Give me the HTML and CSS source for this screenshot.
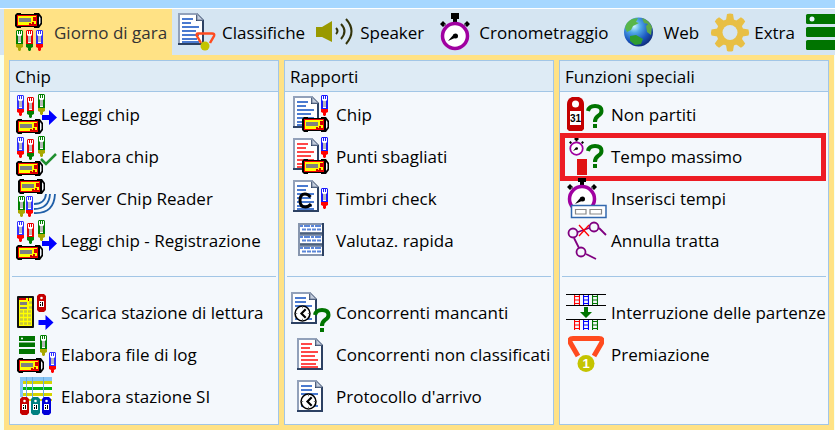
FILE: index.html
```html
<!DOCTYPE html>
<html lang="it">
<head>
<meta charset="utf-8">
<title>Giorno di gara</title>
<link rel="stylesheet" href="styles.css">
</head>
<body>
<svg class="sprites" aria-hidden="true">
  <defs>
    <symbol id="pen" viewBox="0 0 7 21">
      <path d="M1 0H6L7 1V14H0V1Z" fill="currentColor"/>
      <path d="M1 1H2V4H3V1H4V4H5V1H6V5L5 6V13H2V6L1 5Z" fill="#fff"/>
      <path d="M2 6H5V12H2Z" fill="#b8b8b8"/>
      <path d="M0 14H7V17L5 18V20L4 21H3L2 20V18L0 17Z" fill="var(--tip)"/>
    </symbol>
    <symbol id="reader" viewBox="0 0 27 15">
      <path d="M2 0H6V1H19V0H24L27 4V11L24 15H19V14H6V15H2L0 13V2Z" fill="#000"/>
      <path d="M2 2H22V13H2Z" fill="#f00000"/>
      <path d="M3 3H21V12H3Z" fill="#ff0"/>
      <path d="M4 5H16V9H4Z" fill="#808080"/>
      <path d="M18 4H21V8H18ZM14 10H16V11H14ZM17 9H19V11H21V12H14V11H17Z" fill="#d00000"/>
      <path d="M24 3L25.500 5V10L24 12Z" fill="#f4f8fc"/>
    </symbol>
    <symbol id="arrow" viewBox="0 0 15 15">
      <path d="M0 5H7V0L15 7.500L7 15V10H0Z" fill="#00f"/>
    </symbol>
    <symbol id="doc" viewBox="0 0 26 32">
      <path d="M0 0H19L26 7V32H0Z" fill="#2c4163"/>
      <path d="M0 0H19L20 2H2V30H0Z" fill="#92a1ba"/>
      <path d="M2 2H18V8H24V30H2Z" fill="#fff"/>
      <path d="M19 1L25 7H19Z" fill="#c3cddd"/>
      <path d="M19 1V7H25" fill="none" stroke="#74839c"/>
    </symbol>
    <symbol id="lines" viewBox="0 0 26 32">
      <path d="M4 6H15M4 10H13M4 14H21M4 18H18M4 22H21M4 26H19M4 29H21" stroke="currentColor" stroke-width="2" fill="none"/>
    </symbol>
    <symbol id="clock" viewBox="0 0 16 16">
      <circle cx="8" cy="8" r="7" fill="#fff" stroke="#000" stroke-width="1.500"/>
      <path d="M11 4L7 8L11 12" fill="none" stroke="#000" stroke-width="2"/>
      <path d="M8 1.500V3M8 13V14.500M1.500 8H3M13 8H14.500" stroke="#777"/>
    </symbol>
    <symbol id="watch" viewBox="0 0 30 38">
      <path d="M11 0H19V6H17V9H13V6H11Z" fill="#000"/>
      <path d="M3 8L6 11L3 14L0 11ZM27 8L30 11L27 14L24 11Z" fill="#000"/>
      <path d="M4 11L8 14M26 11L22 14" stroke="#555"/>
      <circle cx="15" cy="23" r="12.500" fill="#fff" stroke="#a000a0" stroke-width="3.500"/>
      <path d="M8 28L14 21L17 24Z" fill="#000"/>
      <circle cx="15.500" cy="23" r="2.500" fill="#000"/>
    </symbol>
    <symbol id="pill" viewBox="0 0 9 18">
      <path d="M2 0H7L9 2V16L7 18H2L0 16V2Z" fill="currentColor"/>
      <circle cx="4.500" cy="4" r="1.300" fill="#fff"/>
      <path d="M2 7H7V13H2Z" fill="#fff"/>
      <path d="M3 8H4V9H3ZM3 10H4V12H3ZM5 8H6V12H5Z" fill="#000"/>
    </symbol>
    <symbol id="ribbon" viewBox="0 0 36 22">
      <path d="M10 20L2.500 7Q0.500 2.500 5 2.500H31Q35.500 2.500 33.500 7L26 20" fill="none" stroke="#ff4b1f" stroke-width="5"/>
    </symbol>
    <symbol id="question" viewBox="0 0 18 24">
      <path d="M2 7Q3 2 9 2Q15.500 2 15.500 7Q15.500 10 12 12Q9 14 9 18" fill="none" stroke="#007400" stroke-width="4"/>
      <path d="M7 20H11V24H7Z" fill="#007400"/>
    </symbol>
    <symbol id="ladder" viewBox="0 0 6 10">
      <path d="M0.500 0V10M5.500 0V10M0 1.500H6M0 5H6M0 8.500H6" fill="none" stroke="currentColor" stroke-width="1.200"/>
    </symbol>
    <symbol id="leggi" viewBox="0 0 42 42">
      <use href="#pen" class="pen-blue" x="2" y="1" width="7" height="21"/>
      <use href="#pen" class="pen-red" x="12" y="3" width="7" height="21"/>
      <use href="#pen" class="pen-green" x="23" y="0" width="7" height="21"/>
      <use href="#reader" x="1" y="25" width="27" height="15"/>
    </symbol>
  </defs>
</svg>

<div class="window">
  <div class="titlebar"></div>
  <nav class="toolbar">
    <button class="tab active" type="button" aria-expanded="true">
      <svg class="icon" viewBox="0 0 42 42"><use href="#reader" x="7" y="2" width="27" height="15"/><use href="#pen" class="pen-green" x="8" y="19" width="7" height="21"/><use href="#pen" class="pen-red" x="18" y="19" width="7" height="21"/><use href="#pen" class="pen-blue" x="28" y="19" width="7" height="21"/></svg>
      <span>Giorno di gara</span>
    </button>
    <button class="tab" type="button">
      <svg class="icon" viewBox="0 0 42 42"><use href="#doc" x="2" y="2" width="26" height="32"/><use href="#lines" class="ink-blue" x="2" y="2" width="26" height="32"/><path d="M25 32L21 25Q20 22.500 22 22.500H36Q39 22.500 38 25L34 32" fill="none" stroke="#ff4b1f" stroke-width="2.500"/><circle cx="29" cy="35" r="4.500" fill="#c4c400"/></svg>
      <span>Classifiche</span>
    </button>
    <button class="tab" type="button">
      <svg class="icon" viewBox="0 0 42 42"><path d="M2 16H8L18 10V31L8 26H2Z" fill="#999900"/><g fill="none" stroke="#33330a" stroke-width="2"><path d="M22 17Q25 20 22 23"/><path d="M27 13Q34 20 27 28"/><path d="M32 8Q43 20 32 33"/></g></svg>
      <span>Speaker</span>
    </button>
    <button class="tab" type="button">
      <svg class="icon" viewBox="0 0 42 42"><use href="#watch" x="7" y="2" width="30" height="38"/></svg>
      <span>Cronometraggio</span>
    </button>
    <button class="tab" type="button">
      <svg class="icon" viewBox="0 0 42 42">
        <defs><radialGradient id="sea" cx=".35" cy=".3" r=".75"><stop offset="0" stop-color="#c8f4ff"/><stop offset=".3" stop-color="#50a8e8"/><stop offset=".7" stop-color="#1b55bd"/><stop offset="1" stop-color="#102c78"/></radialGradient></defs>
        <circle cx="20.500" cy="21" r="14.500" fill="url(#sea)"/>
        <path d="M7 17Q8 11 14 8L20 7L18 11L21 12L15 15L13 19L9 21Z" fill="#58b64a"/>
        <path d="M24 7Q31 9 34 16L33 24L29 21L28 15L30 13L26 12Z" fill="#5fa948"/>
        <path d="M12 25L18 24L25 28L23 33L17 34L12 30Z" fill="#2f9c2f"/>
      </svg>
      <span>Web</span>
    </button>
    <button class="tab" type="button">
      <svg class="icon" viewBox="0 0 42 42"><g fill="#e8bf45"><path id="tooth" d="M18 9L19 3Q22 2 25 3L26 9V34L25 40Q22 41 19 40L18 34Z"/><use href="#tooth" transform="rotate(45 22 21.500)"/><use href="#tooth" transform="rotate(90 22 21.500)"/><use href="#tooth" transform="rotate(135 22 21.500)"/><circle cx="22" cy="21.500" r="13.500"/></g><circle cx="22" cy="21.500" r="7.500" fill="#d5e5f2"/></svg>
      <span>Extra</span>
    </button>
    <button class="tab" type="button" aria-label="Server">
      <svg class="icon" viewBox="0 0 42 42"><g fill="#007400"><rect x="2" y="3" width="40" height="10" rx="1.500"/><rect x="2" y="16" width="40" height="10" rx="1.500"/><rect x="2" y="29" width="40" height="10" rx="1.500"/></g><circle cx="8" cy="8" r="2.500" fill="#e8f4ff"/></svg>
    </button>
  </nav>

  <main class="menu">
    <section class="panel">
      <h2>Chip</h2>
      <ul>
        <li><button type="button"><svg class="icon" viewBox="0 0 42 42"><use href="#leggi" width="42" height="42"/><use href="#arrow" x="27" y="16" width="15" height="15"/></svg>Leggi chip</button></li>
        <li><button type="button"><svg class="icon" viewBox="0 0 42 42"><use href="#leggi" width="42" height="42"/><path d="M26 23L31 28L41 18" fill="none" stroke="#209030" stroke-width="2.500"/></svg>Elabora chip</button></li>
        <li><button type="button"><svg class="icon" viewBox="0 0 42 42"><use href="#reader" x="3" y="1" width="27" height="15"/><use href="#pen" class="pen-green" x="3" y="18" width="7" height="21"/><use href="#pen" class="pen-blue" x="11" y="18" width="7" height="21"/><path d="M19 26Q30 26 31 16M19 31Q34 31 35 16M19 35Q39 36 40 16" fill="none" stroke="#1f5fa8" stroke-width="1.800"/></svg>Server Chip Reader</button></li>
        <li><button type="button"><svg class="icon" viewBox="0 0 42 42"><use href="#leggi" width="42" height="42"/><use href="#arrow" x="27" y="16" width="15" height="15"/></svg>Leggi chip - Registrazione</button></li>
      </ul>
      <hr>
      <ul>
        <li><button type="button"><svg class="icon" viewBox="0 0 42 42"><rect x="2" y="4" width="17" height="32" rx="1" fill="#111"/><path d="M4 6H17V34H4Z" fill="#ff0"/><path d="M4 6H11V8H4ZM13 6H14V9H13Z" fill="#d00000"/><path d="M5 10H12V13H5ZM5 15H12V17H5Z" fill="#808080"/><path d="M5 19.500H17M5 23.500H17M5 27.500H17M5 31.500H17M14 10.500H17M14 15.500H17" stroke="#c6c63c" stroke-width="2.500" stroke-dasharray="3 1"/><use href="#pill" class="ink-red" x="22" y="2" width="9" height="18"/><use href="#arrow" x="23" y="23" width="16" height="15"/></svg>Scarica stazione di lettura</button></li>
        <li><button type="button"><svg class="icon" viewBox="0 0 42 42"><path d="M4 2H20V7H4ZM4 8.500H20V13H4ZM4 15H20V20H4Z" fill="#007400"/><circle cx="7" cy="4.500" r="1" fill="#fff"/><use href="#pen" class="pen-green" x="25" y="1" width="7" height="21"/><use href="#reader" x="2" y="24" width="27" height="15"/><use href="#pen" class="pen-blue" x="34" y="18" width="7" height="21"/></svg>Elabora file di log</button></li>
        <li><button type="button"><svg class="icon" viewBox="0 0 42 42"><path d="M5 1H37V5H8V21H5Z" fill="#86c5f5"/><path d="M8 5H37V8H8ZM8 17H37V20H8ZM8 23H37V25H8Z" fill="#d4d400"/><path d="M8 8H37V11H8ZM8 14H37V17H8ZM8 20H37V23H8Z" fill="#fff"/><path d="M8 11H37V14H8Z" fill="#00b414"/><path d="M11.500 1V22M17.500 1V22M28.500 1V22" stroke="#6aabdc"/><use href="#pill" class="ink-red" x="5" y="21" width="9" height="18"/><use href="#pill" class="ink-teal" x="16" y="21" width="9" height="18"/><use href="#pill" class="ink-navy" x="27" y="21" width="9" height="18"/></svg>Elabora stazione SI</button></li>
      </ul>
    </section>

    <section class="panel">
      <h2>Rapporti</h2>
      <ul>
        <li><button type="button"><svg class="icon" viewBox="0 0 42 42"><use href="#doc" x="3" y="2" width="26" height="32"/><use href="#lines" class="ink-blue" x="3" y="2" width="26" height="32"/><use href="#pen" class="pen-solid" x="31" y="1" width="7" height="21"/><use href="#reader" x="12" y="23" width="27" height="15"/></svg>Chip</button></li>
        <li><button type="button"><svg class="icon" viewBox="0 0 42 42"><use href="#doc" x="3" y="2" width="26" height="32"/><use href="#lines" class="ink-coral" x="3" y="2" width="26" height="32"/><use href="#pen" class="pen-solid" x="31" y="1" width="7" height="21"/><use href="#reader" x="12" y="23" width="27" height="15"/></svg>Punti sbagliati</button></li>
        <li><button type="button"><svg class="icon" viewBox="0 0 42 42"><use href="#doc" x="3" y="2" width="26" height="32"/><use href="#lines" class="ink-blue" x="3" y="2" width="26" height="32"/><path d="M20.500 19Q18 16 15 16Q10 16 10 22.500Q10 29 15.500 29Q18.500 29 21 26" fill="none" stroke="#000" stroke-width="3"/><use href="#pen" class="pen-solid" x="31" y="10" width="7" height="21"/></svg>Timbri check</button></li>
        <li><button type="button"><svg class="icon" viewBox="0 0 42 42"><path d="M8 3H34V36H8Z" fill="#2c4163"/><path d="M8 3H32V36H8Z" fill="#8796ae"/><path d="M10 5H32V12H10ZM10 16H32V23H10ZM10 27H32V34H10Z" fill="#fff"/><path d="M10 13.500H32M10 24.500H32" stroke="#4c607c" stroke-width="2"/><path d="M10 6H31M10 17H31M10 28H31" stroke="#5a86d8" stroke-width="2" stroke-dasharray="3 1 6 1"/><path d="M12 9.500H31M12 20.500H31M12 31.500H31" stroke="#5a86d8" stroke-width="2" stroke-dasharray="4 1"/></svg>Valutaz. rapida</button></li>
      </ul>
      <hr>
      <ul>
        <li><button type="button"><svg class="icon" viewBox="0 0 42 42"><use href="#doc" x="1" y="0" width="26" height="32"/><path d="M5 6H16M5 10H16M5 14H22M5 27H22" stroke="#4a7ad0" stroke-width="2"/><use href="#clock" x="4" y="13" width="17" height="17"/><use href="#question" x="23" y="16" width="18" height="24"/></svg>Concorrenti mancanti</button></li>
        <li><button type="button"><svg class="icon" viewBox="0 0 42 42"><use href="#doc" x="7" y="4" width="26" height="32"/><use href="#lines" class="ink-coral" x="7" y="4" width="26" height="32"/></svg>Concorrenti non classificati</button></li>
        <li><button type="button"><svg class="icon" viewBox="0 0 42 42"><use href="#doc" x="7" y="4" width="26" height="32"/><path d="M11 10H22M11 14H22M11 18H28M11 30H28" stroke="#4a7ad0" stroke-width="2"/><use href="#clock" x="10" y="17" width="17" height="17"/></svg>Protocollo d'arrivo</button></li>
      </ul>
    </section>

    <section class="panel">
      <h2>Funzioni speciali</h2>
      <ul>
        <li><button type="button"><svg class="icon" viewBox="0 0 42 42"><path d="M7 3H14Q19 5 19 10V35L17 37H4L2 35V10Q2 5 7 3Z" fill="#c40000"/><circle cx="10.500" cy="10" r="3.500" fill="#fff"/><path d="M5 17H16V31H5Z" fill="#fff"/><text class="digits" x="10.500" y="28" text-anchor="middle">31</text><use href="#question" x="21" y="10" width="18" height="24"/></svg>Non partiti</button></li>
        <li class="marked"><button type="button"><svg class="icon" viewBox="0 0 42 42"><use href="#watch" x="4" y="1" width="15" height="19"/><path d="M12 23H22V39H12Z" fill="#e01414"/><use href="#question" x="21" y="8" width="18" height="24"/></svg>Tempo massimo</button></li>
        <li><button type="button"><svg class="icon" viewBox="0 0 42 42"><use href="#watch" x="2" y="-2" width="30" height="38"/><path d="M6.500 27.500H41V39.500H6.500Z" fill="#fff" stroke="#3268ae" stroke-width="1.500"/><path d="M10.500 31.500H21V36H10.500ZM25 31.500H36.500V36H25Z" fill="#fff" stroke="#888" stroke-width="1.200"/></svg>Inserisci tempi</button></li>
        <li><button type="button"><svg class="icon" viewBox="0 0 42 42"><g fill="none" stroke="#800080" stroke-width="1.800"><path d="M13 12L24 8M34 8L41 15M9 18L14 28M21 34L31 39"/><circle cx="8" cy="13" r="4.500"/><circle cx="29" cy="7" r="4.500"/><circle cx="16" cy="32" r="4.500"/></g><path d="M14 5L24 16M24 5L14 16" stroke="#f00" stroke-width="1.300"/></svg>Annulla tratta</button></li>
      </ul>
      <hr>
      <ul>
        <li><button type="button"><svg class="icon" viewBox="0 0 42 42"><path d="M1 2.500H41M1 13.500H41M1 27.500H41" stroke="#000"/><use href="#ladder" class="ladder-red" x="9" y="3" width="6" height="10"/><use href="#ladder" class="ladder-blue" x="18" y="3" width="6" height="10"/><use href="#ladder" class="ladder-green" x="27" y="3" width="6" height="10"/><use href="#ladder" class="ladder-red" x="9" y="28" width="6" height="10"/><use href="#ladder" class="ladder-blue" x="18" y="28" width="6" height="10"/><use href="#ladder" class="ladder-green" x="27" y="28" width="6" height="10"/><path d="M19 15H23V20H27L21 26L15 20H19Z" fill="#007400"/></svg>Interruzione delle partenze</button></li>
        <li><button type="button"><svg class="icon" viewBox="0 0 42 42"><use href="#ribbon" x="3" y="2" width="36" height="22"/><circle cx="21" cy="29.500" r="8.500" fill="#c4c400"/><text class="place" x="21" y="34" text-anchor="middle">1</text></svg>Premiazione</button></li>
      </ul>
    </section>
  </main>
</div>
</body>
</html>
```
FILE: styles.css
```css
* {
  box-sizing: border-box;
}

body {
  margin: 0;
  background: #f4fff4;
  color: #000;
  font: 17px/26px "Open Sans", "Noto Sans", sans-serif;
  overflow: hidden;
}

button {
  margin: 0;
  padding: 0;
  border: 0;
  background: none;
  color: inherit;
  font: inherit;
  text-align: left;
  white-space: nowrap;
}

.sprites {
  position: absolute;
  width: 0;
  height: 0;
}

.icon {
  flex: none;
  width: 42px;
  height: 42px;
}

.titlebar {
  height: 9px;
  background: #a6d7ff;
  border-bottom: 1px solid #fff;
}

.toolbar {
  display: flex;
  height: 46px;
  padding-left: 4px;
  background: #d5e5f2;
  overflow: hidden;
}

.tab {
  display: flex;
  flex: none;
  align-items: center;
  gap: 4px;
  padding: 0 5px 0 4px;
}

.tab span {
  line-height: 24px;
  padding-top: 2px;
}

.tab.active {
  background: #ffe285;
  color: #333;
}

.menu {
  display: grid;
  grid-template-columns: repeat(3, 1fr);
  gap: 5px;
  margin: 0 1px 0 4px;
  padding: 5px;
  background: #ffe285;
}

.panel {
  min-width: 0;
  padding-bottom: 6px;
  border: 1px solid #a2c6e6;
  background: #f4f8fc;
}

.panel h2 {
  height: 31px;
  margin: 0 0 2px;
  padding: 3px 5px 0;
  border-bottom: 1px solid #a2c6e6;
  background: #deebf5;
  font: inherit;
}

.panel ul {
  margin: 0;
  padding: 0 0 0 5px;
  list-style: none;
}

.panel li {
  position: relative;
  height: 42px;
}

.panel li button {
  display: flex;
  align-items: center;
  gap: 4px;
  width: 100%;
  height: 42px;
}

.panel hr {
  height: 1px;
  margin: 14px 2px 15px;
  border: 0;
  background: #a2c6e6;
}

.marked::after {
  content: "";
  position: absolute;
  inset: -3px 2px -3px -5px;
  border: 5px solid #ed1c24;
  pointer-events: none;
}

.pen-blue { color: #3030ff; --tip: #f00; }
.pen-solid { color: #1818ff; --tip: #f00; }
.pen-red { color: #e80000; --tip: #008000; }
.pen-green { color: #008000; --tip: #a8a800; }

.ink-blue { color: #4a7ad0; }
.ink-coral { color: #ff4848; }
.ink-red { color: #c40000; }
.ink-teal { color: #008080; }
.ink-navy { color: #0000d8; }

.ladder-red { color: #f00; }
.ladder-blue { color: #00f; }
.ladder-green { color: #007400; }

.digits {
  font: bold 10px "Liberation Sans", sans-serif;
}

.place {
  fill: #fff;
  font: bold 13px "Liberation Sans", sans-serif;
}
```
